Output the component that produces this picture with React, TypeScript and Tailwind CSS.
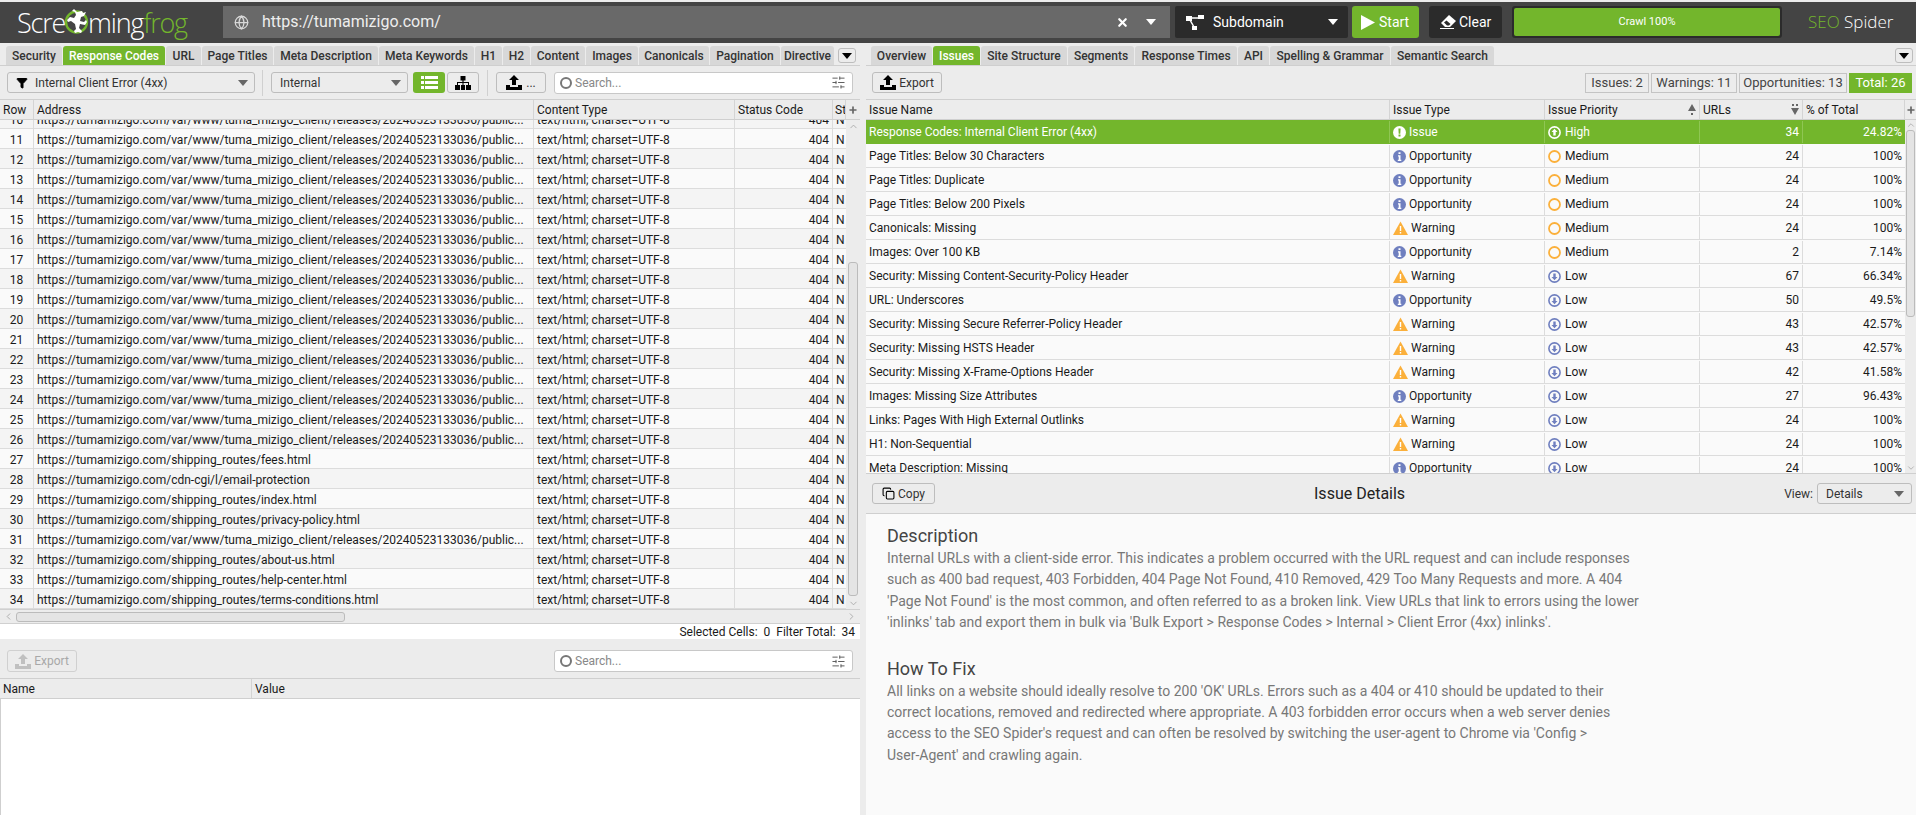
import { ChevronDown, ChevronLeft, ChevronRight, ChevronUp, Filter, SlidersHorizontal, Globe, X, Copy, Plus } from 'lucide-react';

const leftTabs = [
  { label: 'Security', w: 'w-[56px]' },
  { label: 'Response Codes', w: 'w-[102px]', active: true },
  { label: 'URL', w: 'w-[35px]' },
  { label: 'Page Titles', w: 'w-[71px]' },
  { label: 'Meta Description', w: 'w-[104px]' },
  { label: 'Meta Keywords', w: 'w-[95px]' },
  { label: 'H1', w: 'w-[27px]' },
  { label: 'H2', w: 'w-[27px]' },
  { label: 'Content', w: 'w-[54px]' },
  { label: 'Images', w: 'w-[52px]' },
  { label: 'Canonicals', w: 'w-[70px]' },
  { label: 'Pagination', w: 'w-[70px]' },
  { label: 'Directive', w: 'w-[53px]' },
];

const rightTabs = [
  { label: 'Overview', w: 'w-[61px]' },
  { label: 'Issues', w: 'w-[47px]', active: true },
  { label: 'Site Structure', w: 'w-[86px]' },
  { label: 'Segments', w: 'w-[66px]' },
  { label: 'Response Times', w: 'w-[102px]' },
  { label: 'API', w: 'w-[31px]' },
  { label: 'Spelling & Grammar', w: 'w-[120px]' },
  { label: 'Semantic Search', w: 'w-[103px]' },
];

const pub = 'https://tumamizigo.com/var/www/tuma_mizigo_client/releases/20240523133036/public...';
const urls: [number, string][] = [
  ...Array.from({ length: 17 }, (_, i): [number, string] => [10 + i, pub]),
  [27, 'https://tumamizigo.com/shipping_routes/fees.html'],
  [28, 'https://tumamizigo.com/cdn-cgi/l/email-protection'],
  [29, 'https://tumamizigo.com/shipping_routes/index.html'],
  [30, 'https://tumamizigo.com/shipping_routes/privacy-policy.html'],
  [31, pub],
  [32, 'https://tumamizigo.com/shipping_routes/about-us.html'],
  [33, 'https://tumamizigo.com/shipping_routes/help-center.html'],
  [34, 'https://tumamizigo.com/shipping_routes/terms-conditions.html'],
];

type Issue = { name: string; type: 'Issue' | 'Opportunity' | 'Warning'; priority: 'High' | 'Medium' | 'Low'; urls: number; pct: string };

const issues: Issue[] = [
  { name: 'Response Codes: Internal Client Error (4xx)', type: 'Issue', priority: 'High', urls: 34, pct: '24.82%' },
  { name: 'Page Titles: Below 30 Characters', type: 'Opportunity', priority: 'Medium', urls: 24, pct: '100%' },
  { name: 'Page Titles: Duplicate', type: 'Opportunity', priority: 'Medium', urls: 24, pct: '100%' },
  { name: 'Page Titles: Below 200 Pixels', type: 'Opportunity', priority: 'Medium', urls: 24, pct: '100%' },
  { name: 'Canonicals: Missing', type: 'Warning', priority: 'Medium', urls: 24, pct: '100%' },
  { name: 'Images: Over 100 KB', type: 'Opportunity', priority: 'Medium', urls: 2, pct: '7.14%' },
  { name: 'Security: Missing Content-Security-Policy Header', type: 'Warning', priority: 'Low', urls: 67, pct: '66.34%' },
  { name: 'URL: Underscores', type: 'Opportunity', priority: 'Low', urls: 50, pct: '49.5%' },
  { name: 'Security: Missing Secure Referrer-Policy Header', type: 'Warning', priority: 'Low', urls: 43, pct: '42.57%' },
  { name: 'Security: Missing HSTS Header', type: 'Warning', priority: 'Low', urls: 43, pct: '42.57%' },
  { name: 'Security: Missing X-Frame-Options Header', type: 'Warning', priority: 'Low', urls: 42, pct: '41.58%' },
  { name: 'Images: Missing Size Attributes', type: 'Opportunity', priority: 'Low', urls: 27, pct: '96.43%' },
  { name: 'Links: Pages With High External Outlinks', type: 'Warning', priority: 'Low', urls: 24, pct: '100%' },
  { name: 'H1: Non-Sequential', type: 'Warning', priority: 'Low', urls: 24, pct: '100%' },
  { name: 'Meta Description: Missing', type: 'Opportunity', priority: 'Low', urls: 24, pct: '100%' },
];

const Caret = ({ className = 'text-[#666]' }: { className?: string }) => (
  <svg width="10" height="6" viewBox="0 0 10 6" className={`shrink-0 ${className}`}>
    <path d="M0 0h10L5 6z" fill="currentColor" />
  </svg>
);

const ExportIcon = ({ className = 'text-black' }: { className?: string }) => (
  <svg width="16" height="15" viewBox="0 0 16 15" className={`shrink-0 ${className}`}>
    <path d="M8 0l5 5h-3v5H6V5H3zM0 10h4v2h8v-2h4v5H0z" fill="currentColor" />
  </svg>
);

const ListIcon = () => (
  <svg width="17" height="13" viewBox="0 0 17 13" className="shrink-0 text-white">
    <path d="M0 0h3v3H0zM4 0h13v3H4zM0 5h3v3H0zM4 5h13v3H4zM0 10h3v3H0zM4 10h13v3H4z" fill="currentColor" />
  </svg>
);

const TreeIcon = () => (
  <svg width="16" height="14" viewBox="0 0 16 14" className="shrink-0 text-black">
    <path d="M5.5 0h5v4.5H8.6V6H14v3h2v5h-5V9h2V7H8.5v2H10v5H6V9h1.5V7H3v2h2v5H0V9h2V6h5.4V4.5H5.5z" fill="currentColor" />
  </svg>
);

const BranchIcon = () => (
  <svg width="18" height="15" viewBox="0 0 18 15" className="shrink-0 text-white">
    <path d="M0 1h6v5H0zM12 0h6v4h-6zM6 11h5v4H6z" fill="currentColor" />
    <path d="M5 3h8M4 5l4 7" stroke="currentColor" strokeWidth="1.5" fill="none" />
  </svg>
);

const EraserIcon = () => (
  <svg width="16" height="14" viewBox="0 0 16 14" className="shrink-0 text-white">
    <path d="M9 0l7 6-6 6H5L1 8z" fill="currentColor" />
    <path d="M4 7.5l3 3h2l1.5-1.5-4-3.5z" fill="#2b2b2b" />
    <path d="M0 13h14v1H0z" fill="currentColor" />
  </svg>
);

const TypeIcon = ({ type }: { type: Issue['type'] }) => {
  if (type === 'Warning') {
    return (
      <svg width="15" height="14" viewBox="0 0 15 14" className="shrink-0">
        <path d="M7.5 0.5L15 14H0z" fill="#fbb03b" />
        <path d="M6.8 5h1.4v5H6.8zM6.8 11h1.4v1.5H6.8z" fill="#fff" />
      </svg>
    );
  }
  if (type === 'Issue') {
    return (
      <svg width="13" height="13" viewBox="0 0 13 13" className="shrink-0">
        <circle cx="6.5" cy="6.5" r="6.5" fill="#fff" />
        <path d="M5.4 2.5h2.2l-.3 5.2H5.7zM5.5 8.6h2v2h-2z" fill="#73b62c" />
      </svg>
    );
  }
  return (
    <svg width="13" height="13" viewBox="0 0 13 13" className="shrink-0">
      <circle cx="6.5" cy="6.5" r="6.5" fill="#6f7fbf" />
      <path d="M5.5 2.2h2v1.8h-2zM5 5.2h2.5v4.6h.8v1.2H4.8V9.8h.9V6.4H5z" fill="#fff" />
    </svg>
  );
};

const PriorityIcon = ({ priority }: { priority: Issue['priority'] }) => {
  if (priority === 'Medium') {
    return (
      <svg width="13" height="13" viewBox="0 0 13 13" className="shrink-0">
        <circle cx="6.5" cy="6.5" r="5.5" fill="none" stroke="#fbb03b" strokeWidth="1.8" />
      </svg>
    );
  }
  const color = priority === 'High' ? '#fff' : '#6f7fbf';
  return (
    <svg width="13" height="13" viewBox="0 0 13 13" className="shrink-0">
      <circle cx="6.5" cy="6.5" r="5.6" fill="none" stroke={color} strokeWidth="1.6" />
      {priority === 'High' ? (
        <path d="M6.5 2.8l3 3.2H7.7v3.6H5.3V6H3.5z" fill={color} />
      ) : (
        <path d="M6.5 10.2l-3-3.2h1.8V3.4h2.4V7h1.8z" fill={color} />
      )}
    </svg>
  );
};

const SortMark = ({ down }: { down?: boolean }) => (
  <svg width="8" height="12" viewBox="0 0 8 12" className="shrink-0 text-[#666]">
    {down ? (
      <path d="M1 0h2v2H1zM5 0h2v2H5zM0 4h8l-4 7z" fill="currentColor" />
    ) : (
      <path d="M4 0l4 7H0zM3 9h2v2H3z" fill="currentColor" />
    )}
  </svg>
);

const SearchBox = () => (
  <div className="flex h-[22px] w-[299px] items-center rounded-[3px] border border-[#c8c8c8] bg-white pl-[5px] pr-[6px]">
    <span className="h-[12px] w-[12px] shrink-0 rounded-full border-2 border-[#777]" />
    <span className="ml-[3px] flex-1 text-[#888]">Search...</span>
    <SlidersHorizontal size={15} strokeWidth={1.5} className="text-[#555]" />
  </div>
);

const TabStrip = ({ tabs, className }: { tabs: { label: string; w: string; active?: boolean }[]; className: string }) => (
  <div className={`flex h-[19px] items-stretch gap-px ${className}`}>
    {tabs.map((t) => (
      <div
        key={t.label}
        className={`${t.w} flex shrink-0 items-center justify-center overflow-hidden whitespace-nowrap rounded-t-[3px] pt-px font-medium ${
          t.active ? 'bg-[#73b62c] text-white' : 'bg-[#d8d8d8] text-[#333]'
        }`}
      >
        {t.label}
      </div>
    ))}
  </div>
);

const TabMenu = () => (
  <div className="flex h-[15px] w-[18px] items-center justify-center rounded-[3px] border border-[#bdbdbd] bg-[#ececec]">
    <Caret className="text-black" />
  </div>
);

const Logo = () => (
  <div className="flex w-[203px] items-center pl-[17px] text-[27px] font-light leading-none tracking-[-1.2px] text-white [font-family:'Open_Sans',sans-serif]">
    <span>Scre</span>
    <svg width="25" height="28" viewBox="0 0 25 28" className="-mx-px shrink-0">
      <circle cx="12.5" cy="14" r="10.5" fill="none" stroke="#73b62c" strokeWidth="2.4" />
      <path
        d="M10 1l3 3 5-1 1 2 3-1-2 4-3 1-1 4 4 1 2-2 1 2-2 3-5-1-1 4 3 3-1 2-3-1-3 1-1-2 2-2-1-5-4-3-3 1-1-2 3-3 4 1 2-3-1-3-3-1z"
        fill="#fff"
      />
    </svg>
    <span>ming</span>
    <span className="text-[#73b62c]">frog</span>
  </div>
);

const TopBar = () => (
  <div className="mt-[2px] flex h-[41px] items-center bg-[#444444] pb-px text-white">
    <Logo />
    <div className="ml-[20px] flex h-[32px] w-[947px] items-center bg-[#696969] pl-[11px] pr-[14px]">
      <Globe size={15} className="text-[#d8d8d8]" />
      <span className="ml-[13px] flex-1 text-[16px] text-[#eeeeee]">https://tumamizigo.com/</span>
      <X size={13} strokeWidth={4} className="text-white" />
      <Caret className="ml-[17px] text-white" />
    </div>
    <div className="ml-[5px] flex h-[32px] w-[173px] items-center rounded-[2px] bg-[#2b2b2b] pl-[11px] pr-[10px]">
      <BranchIcon />
      <span className="ml-[9px] flex-1 text-[14px]">Subdomain</span>
      <Caret className="text-white" />
    </div>
    <div className="ml-[4px] flex h-[32px] w-[67px] items-center rounded-[3px] bg-[#73b62c] pl-[9px]">
      <svg width="14" height="15" viewBox="0 0 14 15" className="shrink-0 text-white">
        <path d="M0 0l14 7.5L0 15z" fill="currentColor" />
      </svg>
      <span className="ml-[4px] text-[14px]">Start</span>
    </div>
    <div className="ml-[10px] flex h-[32px] w-[73px] items-center rounded-[3px] bg-[#2b2b2b] pl-[11px]">
      <EraserIcon />
      <span className="ml-[3px] text-[14px]">Clear</span>
    </div>
    <div className="ml-[10px] flex h-[32px] w-[270px] rounded-[3px] bg-[#2b2b2b] p-[2px]">
      <div className="flex flex-1 items-center justify-center rounded-[2px] bg-[#73b62c] text-[11px]">Crawl 100%</div>
    </div>
    <div className="ml-[26px] whitespace-nowrap text-[17px] font-light [font-family:'Open_Sans',sans-serif]">
      <span className="text-[#73b62c]">SEO</span> Spider
    </div>
  </div>
);

const TH = ({ className, children }: { className: string; children?: React.ReactNode }) => (
  <div className={`flex h-full shrink-0 items-center overflow-hidden whitespace-nowrap border-r border-[#d4d4d4] px-[3px] pt-px ${className}`}>
    {children}
  </div>
);

const LeftPane = () => (
  <div className="flex w-[860px] shrink-0 flex-col">
    <div className="flex h-[20px] items-end justify-between border-b border-[#cfcfcf] pr-[4px]">
      <TabStrip tabs={leftTabs} className="pl-[6px]" />
      <div className="self-start pt-[2px]">
        <TabMenu />
      </div>
    </div>
    <div className="flex h-[33px] items-center pl-[7px] pr-[7px]">
      <div className="flex h-[21px] w-[248px] items-center rounded-[3px] border border-[#bdbdbd] pl-[8px] pr-[6px]">
        <Filter size={12} fill="currentColor" className="text-black" />
        <span className="ml-[7px] flex-1 text-[#333]">Internal Client Error (4xx)</span>
        <Caret />
      </div>
      <div className="ml-[7px] h-[26px] w-px bg-[#d0d0d0]" />
      <div className="ml-[8px] flex h-[21px] w-[137px] items-center rounded-[3px] border border-[#bdbdbd] pl-[8px] pr-[6px]">
        <span className="flex-1 text-[#333]">Internal</span>
        <Caret />
      </div>
      <div className="ml-[5px] flex h-[21px] w-[32px] items-center justify-center rounded-[3px] bg-[#73b62c]">
        <ListIcon />
      </div>
      <div className="ml-[2px] flex h-[21px] w-[32px] items-center justify-center rounded-[3px] border border-[#bdbdbd]">
        <TreeIcon />
      </div>
      <div className="ml-[8px] h-[26px] w-px bg-[#d0d0d0]" />
      <div className="ml-[8px] flex h-[21px] w-[50px] items-center justify-center gap-[4px] rounded-[3px] border border-[#bdbdbd] text-[#333]">
        <ExportIcon />
        <span>...</span>
      </div>
      <div className="ml-[8px]">
        <SearchBox />
      </div>
    </div>

    <div className="flex h-[21px] border-y border-[#cfcfcf] text-[#1a1a1a]">
      <TH className="w-[34px]">Row</TH>
      <TH className="w-[500px]">Address</TH>
      <TH className="w-[201px]">Content Type</TH>
      <TH className="w-[98px]">Status Code</TH>
      <TH className="w-[13px] !px-[2px]">Status</TH>
      <div className="flex flex-1 items-center justify-center">
        <Plus size={10} strokeWidth={4} className="text-[#666]" />
      </div>
    </div>

    <div className="flex h-[489px] overflow-hidden">
      <div className="w-[846px] shrink-0">
        <div className="-mt-[11px]">
          {urls.map(([n, u]) => (
            <div key={n} className={`flex h-[20px] border-b border-[#dcdcdc] leading-[22px] text-[#1a1a1a] ${n % 2 ? 'bg-[#fafafa]' : 'bg-[#f4f4f4]'}`}>
              <div className="w-[34px] shrink-0 border-r border-[#dcdcdc] text-center">{n}</div>
              <div className="w-[500px] shrink-0 overflow-hidden whitespace-nowrap border-r border-[#dcdcdc] pl-[3px]">{u}</div>
              <div className="w-[201px] shrink-0 border-r border-[#dcdcdc] pl-[3px]">text/html; charset=UTF-8</div>
              <div className="w-[98px] shrink-0 border-r border-[#dcdcdc] pr-[3px] text-right">404</div>
              <div className="w-[13px] shrink-0 overflow-hidden pl-[3px]">N</div>
            </div>
          ))}
        </div>
      </div>
      <div className="flex flex-1 flex-col items-center bg-[#ececec]">
        <ChevronUp size={11} className="mt-[1px] text-[#aaa]" />
        <div className="mt-[130px] h-[336px] w-[10px] rounded-[3px] border border-[#bbbbbb] bg-[#e4e4e4]" />
        <ChevronDown size={11} className="mt-[2px] text-[#aaa]" />
      </div>
    </div>

    <div className="flex h-[15px] items-center border-y border-[#d0d0d0] bg-[#ececec] px-[3px]">
      <ChevronLeft size={11} className="text-[#aaa]" />
      <div className="ml-[2px] h-[10px] w-[329px] rounded-[3px] border border-[#bbbbbb] bg-[#e4e4e4]" />
      <div className="flex-1" />
      <ChevronRight size={11} className="text-[#aaa]" />
    </div>
    <div className="flex h-[15px] items-center justify-end gap-[6px] bg-white pr-[5px] text-[#1a1a1a]">
      <span>Selected Cells:&nbsp; 0</span>
      <span>Filter Total:&nbsp; 34</span>
    </div>

    <div className="flex h-[39px] items-center justify-between pl-[7px] pr-[7px] pt-[5px]">
      <div className="flex h-[22px] w-[70px] items-center justify-center gap-[3px] rounded-[3px] border border-[#d0d0d0] text-[#a8a8a8]">
        <ExportIcon className="text-[#c0c0c0]" />
        <span>Export</span>
      </div>
      <SearchBox />
    </div>

    <div className="flex h-[21px] border-y border-[#cfcfcf] text-[#1a1a1a]">
      <TH className="w-[252px]">Name</TH>
      <div className="flex items-center px-[3px] pt-px">Value</div>
    </div>
    <div className="flex-1 border-l border-[#cfcfcf] bg-white" />
  </div>
);

const Badge = ({ className, children }: { className: string; children: React.ReactNode }) => (
  <div className={`flex h-[20px] items-center justify-center text-[13px] ${className}`}>{children}</div>
);

const RightPane = () => (
  <div className="ml-[6px] flex min-w-0 flex-1 flex-col">
    <div className="flex h-[20px] items-end justify-between border-b border-[#cfcfcf] pr-[3px]">
      <TabStrip tabs={rightTabs} className="pl-[5px]" />
      <div className="self-start pt-[2px]">
        <TabMenu />
      </div>
    </div>
    <div className="flex h-[33px] items-center justify-between pl-[6px] pr-[4px]">
      <div className="flex h-[21px] w-[70px] items-center justify-center gap-[3px] rounded-[3px] border border-[#bdbdbd] text-[#333]">
        <ExportIcon />
        <span>Export</span>
      </div>
      <div className="flex gap-[2px] text-[#444]">
        <Badge className="w-[64px] border border-[#c4c4c4]">Issues: 2</Badge>
        <Badge className="w-[86px] border border-[#c4c4c4]">Warnings: 11</Badge>
        <Badge className="w-[108px] border border-[#c4c4c4]">Opportunities: 13</Badge>
        <Badge className="w-[63px] bg-[#73b62c] text-white">Total: 26</Badge>
      </div>
    </div>

    <div className="flex h-[21px] border-y border-[#cfcfcf] text-[#1a1a1a]">
      <TH className="w-[524px]">Issue Name</TH>
      <TH className="w-[155px]">Issue Type</TH>
      <TH className="w-[155px] justify-between">
        Issue Priority
        <SortMark />
      </TH>
      <TH className="w-[103px] justify-between">
        URLs
        <SortMark down />
      </TH>
      <TH className="w-[102px]">% of Total</TH>
      <div className="flex flex-1 items-center justify-center">
        <Plus size={10} strokeWidth={4} className="text-[#666]" />
      </div>
    </div>

    <div className="flex h-[354px] overflow-hidden border-b border-[#cfcfcf]">
      <div className="w-[1039px] shrink-0">
        {issues.map((r, i) => {
          const sel = i === 0;
          const line = sel ? 'border-[#8fc653]' : 'border-[#dcdcdc]';
          return (
            <div key={r.name} className={`flex h-[24px] items-stretch border-b pt-px ${sel ? 'border-[#73b62c] bg-[#73b62c] text-white' : 'border-[#dcdcdc] bg-[#fafafa] text-[#1a1a1a]'}`}>
              <div className={`flex w-[524px] shrink-0 items-center border-r pl-[3px] ${line}`}>{r.name}</div>
              <div className={`flex w-[155px] shrink-0 items-center gap-[3px] border-r pl-[3px] ${line}`}>
                <TypeIcon type={r.type} />
                {r.type}
              </div>
              <div className={`flex w-[155px] shrink-0 items-center gap-[4px] border-r pl-[3px] ${line}`}>
                <PriorityIcon priority={r.priority} />
                {r.priority}
              </div>
              <div className={`flex w-[103px] shrink-0 items-center justify-end border-r pr-[3px] ${line}`}>{r.urls}</div>
              <div className="flex w-[102px] shrink-0 items-center justify-end pr-[3px]">{r.pct}</div>
            </div>
          );
        })}
      </div>
      <div className="flex flex-1 flex-col items-center bg-[#ececec]">
        <ChevronUp size={10} className="text-[#aaa]" />
        <div className="h-[187px] w-[9px] rounded-[3px] border border-[#bbbbbb] bg-[#e4e4e4]" />
        <div className="flex-1" />
        <ChevronDown size={10} className="text-[#aaa]" />
      </div>
    </div>

    <div className="relative flex h-[40px] items-center justify-between border-b border-[#cfcfcf] pl-[6px] pr-[4px]">
      <div className="flex h-[21px] w-[63px] items-center justify-center gap-[3px] rounded-[3px] border border-[#bdbdbd] text-[#333]">
        <Copy size={13} className="text-black" />
        <span>Copy</span>
      </div>
      <div className="text-[16px] text-[#222]">Issue Details</div>
      <div className="flex items-center gap-[4px] text-[#333]">
        <span>View:</span>
        <div className="flex h-[21px] w-[95px] items-center rounded-[3px] border border-[#bdbdbd] pl-[8px] pr-[7px]">
          <span className="flex-1">Details</span>
          <Caret />
        </div>
      </div>
    </div>

    <div className="flex-1 bg-[#fafafa] pl-[21px] pt-[12px] text-[14px] leading-[21.4px] text-[#777]">
      <div className="text-[18px] leading-[20px] text-[#444]">Description</div>
      <p className="mt-[2px] w-[752px]">
        Internal URLs with a client-side error. This indicates a problem occurred with the URL request and can include responses
        such as 400 bad request, 403 Forbidden, 404 Page Not Found, 410 Removed, 429 Too Many Requests and more. A 404
        'Page Not Found' is the most common, and often referred to as a broken link. View URLs that link to errors using the lower
        'inlinks' tab and export them in bulk via 'Bulk Export &gt; Response Codes &gt; Internal &gt; Client Error (4xx) inlinks'.
      </p>
      <div className="mt-[25px] text-[18px] leading-[20px] text-[#444]">How To Fix</div>
      <p className="mt-[2px] w-[752px]">
        All links on a website should ideally resolve to 200 'OK' URLs. Errors such as a 404 or 410 should be updated to their
        correct locations, removed and redirected where appropriate. A 403 forbidden error occurs when a web server denies
        access to the SEO Spider's request and can often be resolved by switching the user-agent to Chrome via 'Config &gt;{' '}
        <span className="whitespace-nowrap">User-Agent'</span> and crawling again.
      </p>
    </div>
  </div>
);

export default function App() {
  return (
    <div className="flex h-[815px] w-[1916px] flex-col overflow-hidden bg-[#ececec] text-[12px] [font-family:Roboto,sans-serif]">
      <TopBar />
      <div className="flex min-h-0 flex-1 pt-[3px]">
        <LeftPane />
        <RightPane />
      </div>
    </div>
  );
}
